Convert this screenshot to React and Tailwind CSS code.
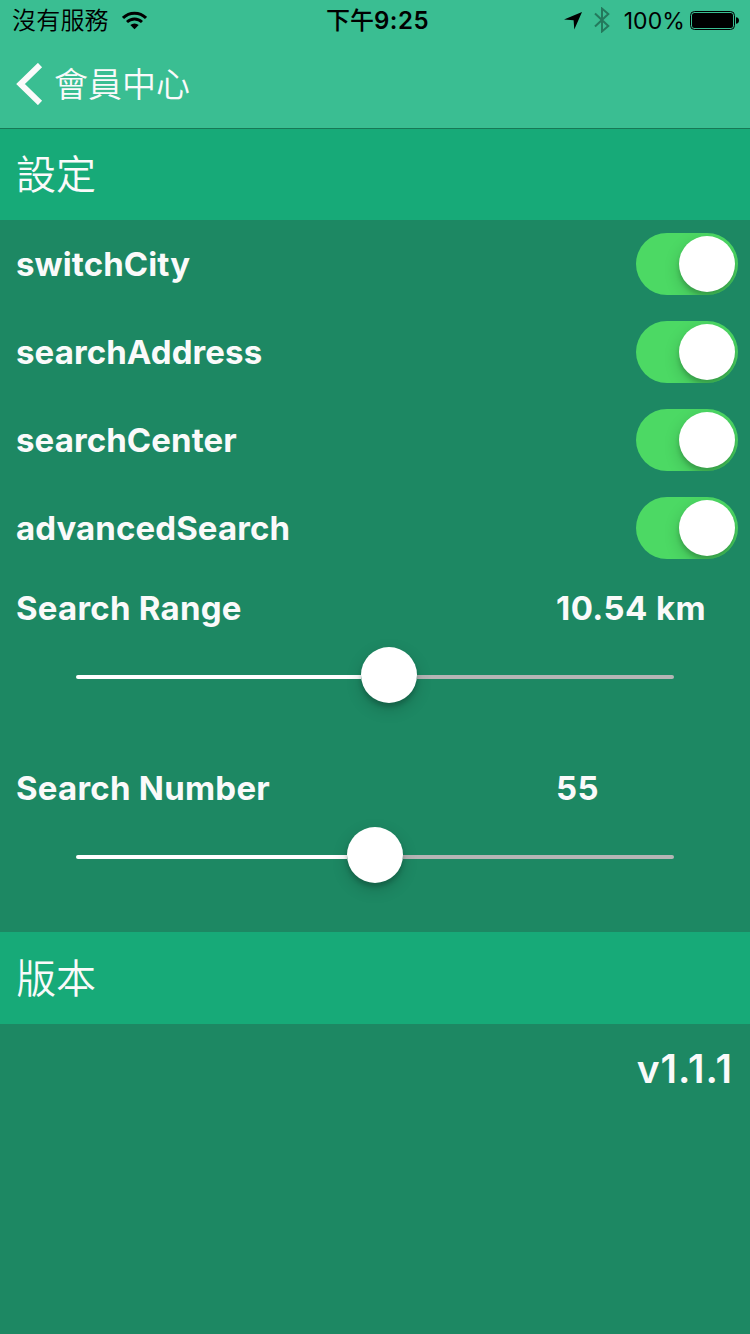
const FONT = "font-['Inter','Noto_Sans_CJK_TC',sans-serif]";

function StatusBar() {
  return (
    <div className="flex h-10 items-center text-black">
      <div className="flex flex-1 items-center pl-3">
        <span className="pt-0.5 text-[24px] leading-10 font-[350] tracking-[0.2px] whitespace-nowrap">沒有服務</span>
        <svg className="ml-[13px] h-[19px] w-[25px]" viewBox="0 0 25 19" fill="none" stroke="currentColor">
          <path d="M1 6.9A16.3 16.3 0 0 1 24 6.9" strokeWidth="3" />
          <path d="M5 11.1A10.6 10.6 0 0 1 20 11.1" strokeWidth="2.8" />
          <path d="M12.5 18.2L8.3 14.1A6 6 0 0 1 16.7 14.1Z" fill="currentColor" stroke="none" />
        </svg>
      </div>
      <span className="flex pt-0.5 pl-1 text-[24px] leading-10 font-semibold whitespace-nowrap">
        <span className="font-[450]">下午</span>
        <span className="tracking-[0.5px]">9:25</span>
      </span>
      <div className="flex flex-1 items-center justify-end pr-[11px]">
        <svg className="mt-0.5 h-[18px] w-[18px]" viewBox="0 0 18 18" fill="currentColor">
          <path d="M18 0L10.3 17.6L9.6 8.2L0 7.6Z" />
        </svg>
        <svg className="ml-3 h-[26px] w-4 text-[#24795c]" viewBox="0 0 16 26" fill="none" stroke="currentColor" strokeWidth="2">
          <path d="M1 6.5L14.3 19L8 24.4V1.6L14.3 7L1 19.5" />
        </svg>
        <span className="ml-[14px] pt-0.5 text-[23px] leading-10 tracking-[0.1px] whitespace-nowrap">100%</span>
        <svg className="ml-[5px] h-[19px] w-[49px]" viewBox="0 0 49 19">
          <rect x="0.5" y="0.5" width="44" height="18" rx="4" fill="none" stroke="black" />
          <rect x="2" y="2" width="41" height="15" rx="2.5" fill="black" />
          <path d="M46 6.2Q49 6.5 49 9.5T46 12.8Z" fill="black" />
        </svg>
      </div>
    </div>
  );
}

function SectionHeader({ title, className = "h-[92px] pt-px" }) {
  return (
    <div className={`flex items-center bg-[#17aa78] pl-4 ${className}`}>
      <span className="text-[40px] leading-none font-[350]">{title}</span>
    </div>
  );
}

function SwitchRow({ label }) {
  return (
    <div className="flex h-[88px] items-center justify-between pr-3 pl-4">
      <span className="text-[33px] leading-10 font-bold tracking-[0.1px]">{label}</span>
      <div className="flex h-[62px] w-[102px] items-center justify-end overflow-hidden rounded-full bg-[#4cd964] pr-[3px]">
        <div className="h-14 w-14 rounded-full bg-white shadow-[0_6px_16px_rgba(0,0,0,0.18),0_4px_4px_rgba(0,0,0,0.16)]" />
      </div>
    </div>
  );
}

function SliderRow({ label, value, percent }) {
  return (
    <div className="h-[180px] pt-4">
      <div className="flex h-10 pl-4">
        <span className="w-[540px] text-[33px] leading-10 font-bold tracking-[0.24px]">{label}</span>
        <span className="text-[33px] leading-10 font-bold tracking-[0.4px]">{value}</span>
      </div>
      <div className="mx-[76px] mt-[19px] flex h-14 items-center">
        <div className="mt-1 h-1 rounded-l-full bg-white" style={{ width: `calc(${percent}% - 28px)` }} />
        <div className="z-10 h-14 w-14 shrink-0 rounded-full bg-white shadow-[0_6px_16px_rgba(0,0,0,0.18),0_4px_4px_rgba(0,0,0,0.16)]" />
        <div className="mt-1 h-1 flex-1 rounded-r-full bg-[#b5b5b5]" />
      </div>
    </div>
  );
}

export default function App() {
  return (
    <div className={`flex h-[1334px] w-[750px] flex-col overflow-hidden bg-[#1d8863] text-[#fafafa] ${FONT}`}>
      <header className="h-[129px] shrink-0 border-b border-[#177956] bg-[#3abe92]">
        <StatusBar />
        <div className="flex h-[88px] items-center pl-4">
          <svg className="h-[42px] w-[27px]" viewBox="0 0 27 42" fill="none" stroke="currentColor" strokeWidth="6">
            <path d="M24 2L4.5 21L24 40" />
          </svg>
          <span className="ml-[11px] pt-0.5 text-[34px] leading-10 font-[350]">會員中心</span>
        </div>
      </header>
      <main>
        <SectionHeader title="設定" className="h-[91px]" />
        <SwitchRow label="switchCity" />
        <SwitchRow label="searchAddress" />
        <SwitchRow label="searchCenter" />
        <SwitchRow label="advancedSearch" />
        <SliderRow label="Search Range" value="10.54 km" percent={52.34} />
        <SliderRow label="Search Number" value="55" percent={50} />
        <SectionHeader title="版本" />
        <div className="flex h-[88px] items-center justify-end pr-[17px]">
          <span className="text-[39px] leading-none font-semibold tracking-[1px]">v1.1.1</span>
        </div>
      </main>
    </div>
  );
}
